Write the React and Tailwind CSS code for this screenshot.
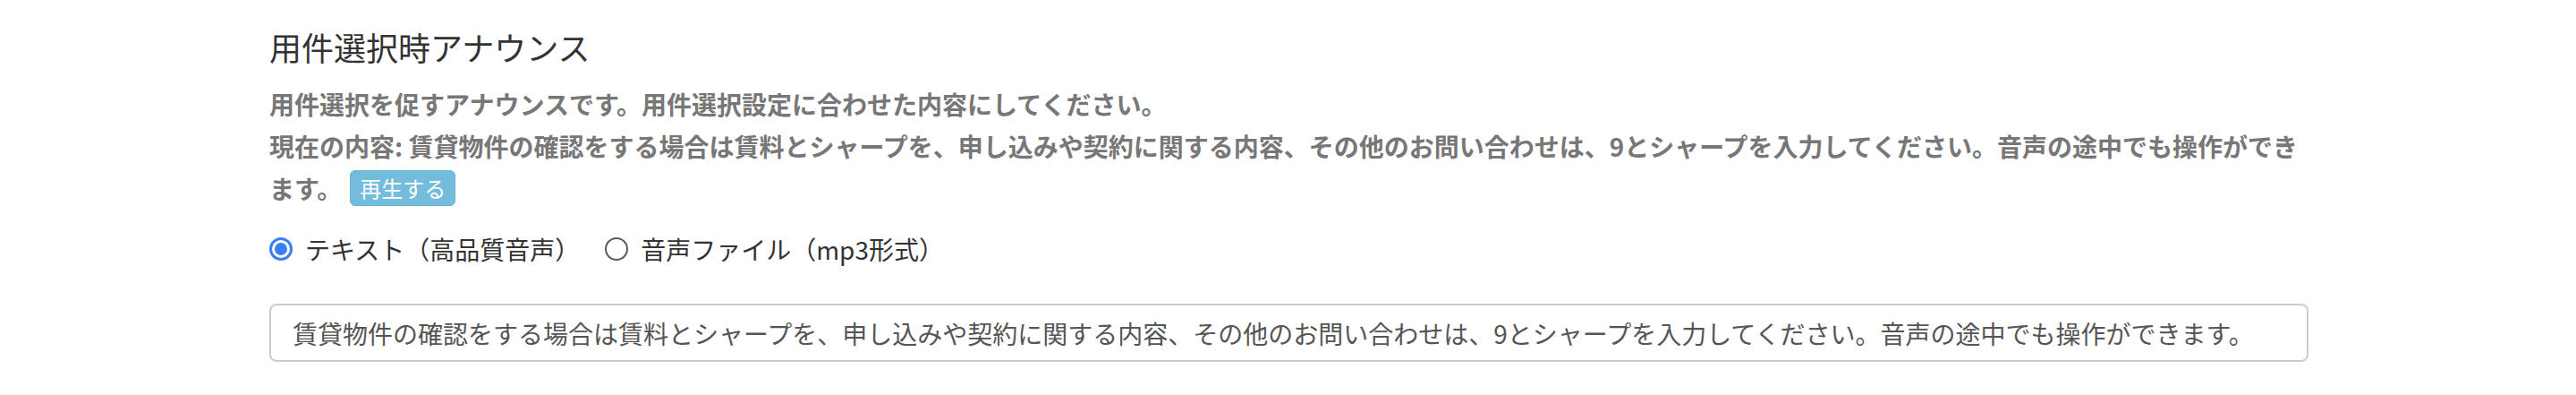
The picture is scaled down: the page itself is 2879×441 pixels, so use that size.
import React, { useState } from 'react';

const jp = "font-['Noto_Sans_CJK_JP','Noto_Sans',sans-serif]";

const Radio = ({ checked, label, onSelect }) => (
    <label className="flex items-center cursor-pointer" onClick={onSelect}>
        {checked ? (
            <span className="w-[26px] h-[26px] rounded-full border-[3px] border-[#3a7ff6] bg-white flex items-center justify-center">
                <span className="w-[14px] h-[14px] rounded-full bg-[#3a7ff6]" />
            </span>
        ) : (
            <span className="w-[26px] h-[26px] rounded-full border-2 border-[#5a5a5a] bg-white" />
        )}
        <span className="ml-[14px] text-[28px] leading-[40px] text-[#333]">{label}</span>
    </label>
);

const App = () => {
    const [mode, setMode] = useState('text');
    const current = '賃貸物件の確認をする場合は賃料とシャープを、申し込みや契約に関する内容、その他のお問い合わせは、9とシャープを入力してください。音声の途中でも操作ができます。';

    return (
        <div className={`w-[2879px] h-[441px] bg-white pl-[301px] pr-[299px] ${jp}`}>
            <h3 className="pt-[28px] text-[36px] leading-[48px] font-normal text-[#333]">用件選択時アナウンス</h3>

            <div className="mt-[17px] text-[28px] leading-[47px] font-bold text-[#777]">
                <p>用件選択を促すアナウンスです。用件選択設定に合わせた内容にしてください。</p>
                <p>
                    {`現在の内容: ${current}`}
                    <button className="ml-[9px] align-[2px] px-[10px] text-[24px] leading-[38px] font-normal text-white bg-[#74bcdc] border border-[#66b3d6] rounded-[6px]">
                        再生する
                    </button>
                </p>
            </div>

            {/* voice source selector */}
            <div className="mt-[24px] flex items-center">
                <Radio checked={mode === 'text'} label="テキスト（高品質音声）" onSelect={() => setMode('text')} />
                <div className="ml-[28px]">
                    <Radio checked={mode === 'file'} label="音声ファイル（mp3形式）" onSelect={() => setMode('file')} />
                </div>
            </div>

            <input
                type="text"
                defaultValue={current}
                className="mt-[41px] block w-full h-[65px] px-[24px] text-[28px] text-[#555] border-2 border-[#ccc] rounded-[8px] outline-none"
            />
        </div>
    );
};

export default App;
